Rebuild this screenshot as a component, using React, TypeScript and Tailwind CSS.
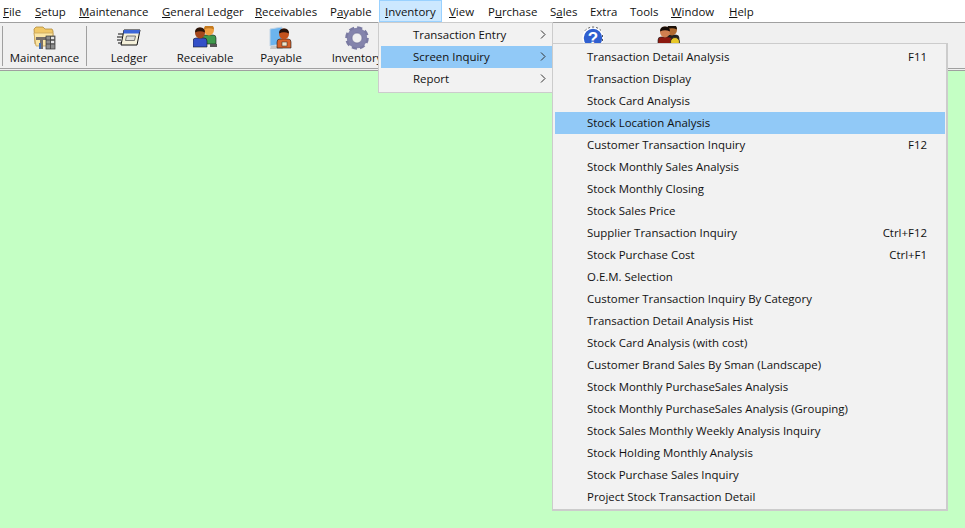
import type { ReactNode } from "react";

const FONT = "font-['Open_Sans','Noto_Sans',sans-serif]";

// label, underlined index, width of the slot in the bar
const MENUS: [string, number, number][] = [
  ["File", 0, 32],
  ["Setup", 0, 44],
  ["Maintenance", 0, 83],
  ["General Ledger", 0, 93],
  ["Receivables", 0, 75],
  ["Payable", 1, 55],
  ["Inventory", 0, 64],
  ["View", 0, 39],
  ["Purchase", 1, 62],
  ["Sales", 1, 40],
  ["Extra", -1, 40],
  ["Tools", -1, 41],
  ["Window", 0, 58],
  ["Help", 0, 40],
];

const INQUIRY: [string, string?][] = [
  ["Transaction Detail Analysis", "F11"],
  ["Transaction Display"],
  ["Stock Card Analysis"],
  ["Stock Location Analysis"],
  ["Customer Transaction Inquiry", "F12"],
  ["Stock Monthly Sales Analysis"],
  ["Stock Monthly Closing"],
  ["Stock Sales Price"],
  ["Supplier Transaction Inquiry", "Ctrl+F12"],
  ["Stock Purchase Cost", "Ctrl+F1"],
  ["O.E.M. Selection"],
  ["Customer Transaction Inquiry By Category"],
  ["Transaction Detail Analysis Hist"],
  ["Stock Card Analysis (with cost)"],
  ["Customer Brand Sales By Sman (Landscape)"],
  ["Stock Monthly PurchaseSales Analysis"],
  ["Stock Monthly PurchaseSales Analysis (Grouping)"],
  ["Stock Sales Monthly Weekly Analysis Inquiry"],
  ["Stock Holding Monthly Analysis"],
  ["Stock Purchase Sales Inquiry"],
  ["Project Stock Transaction Detail"],
];

function Person({ x, y, skin, shirt, hair }: { x: number; y: number; skin: string; shirt: string; hair: string }) {
  return (
    <g>
      <path d={`M${x - 7} ${y + 18}v-6q0-3 3-3h8q3 0 3 3v6z`} fill={shirt} stroke="#1a1a1a" strokeWidth="0.6" />
      <ellipse cx={x} cy={y + 4} rx="5" ry="5.4" fill={skin} />
      <path d={`M${x - 5} ${y + 3.5}q0-5 5-5t5 5q-5-2.4-10 0z`} fill={hair} />
    </g>
  );
}

const FolderIcon = () => (
  <svg width="24" height="24" viewBox="0 0 24 24">
    <path d="M1 3l2-2h7l2 2h7l1 2v13H2z" fill="#f0c868" stroke="#b08a3a" strokeWidth="0.8" />
    <path d="M1 7h19l-1 13H3z" fill="#fbe6a6" stroke="#c9a55a" strokeWidth="0.8" />
    <path d="M3 11h11v3h-4v9H7v-9H3z" fill="#77706a" />
    <path d="M6 17h2v6H6z" fill="#3f6fb5" />
    <rect x="13" y="10" width="9" height="13" fill="#8d8d8d" stroke="#333" strokeWidth="0.7" />
    <path d="M13 14h9M13 18h9M17.5 10v13" stroke="#333" strokeWidth="0.7" />
    <path d="M18 11h3v2h-3zM18 15h3v2h-3z" fill="#e4e4e4" />
  </svg>
);

const LedgerIcon = () => (
  <svg width="24" height="24" viewBox="0 0 24 24">
    <path d="M7 4h16l-3 15H4z" fill="#f5f1da" stroke="#111" strokeWidth="1" />
    <path d="M7 4h16l-.8 3.6H6.2z" fill="#3c66d8" />
    <path d="M9.5 10h9l-1 4.5h-9z" fill="#dededa" stroke="#555" strokeWidth="0.8" />
    <path d="M1 8h5M0 11h5M0 14h4M1 17h3" stroke="#111" strokeWidth="1" />
  </svg>
);

const ReceivableIcon = () => (
  <svg width="24" height="24" viewBox="0 0 24 24">
    <Person x={16} y={0} skin="#f0a040" shirt="#3f9a4c" hair="#c47a1e" />
    <Person x={7} y={3} skin="#a6481c" shirt="#3350c8" hair="#2a1408" />
    <rect x="17" y="18" width="7" height="3" fill="#555" />
  </svg>
);

const PayableIcon = () => (
  <svg width="24" height="24" viewBox="0 0 24 24">
    <path d="M1 3l12-2v17l-12 2z" fill="#6cb4ee" stroke="#c5d6e6" strokeWidth="1" />
    <path d="M2 20h10l2 3H1z" fill="#c9c9c9" />
    <Person x={15} y={4} skin="#c4521c" shirt="#d8622a" hair="#251008" />
    <rect x="13" y="16" width="5" height="4" fill="#f1e4c8" stroke="#222" strokeWidth="0.5" />
  </svg>
);

const GearIcon = () => (
  <svg width="24" height="24" viewBox="0 0 24 24">
    <circle cx="12" cy="12" r="7.6" fill="none" stroke="#8484ac" strokeWidth="5.4" />
    <circle cx="12" cy="12" r="10.6" fill="none" stroke="#7a7aa2" strokeWidth="2.4" strokeDasharray="5.2 3.1" />
    <circle cx="12" cy="12" r="5" fill="#f0f0f0" stroke="#6a6a90" strokeWidth="0.7" />
  </svg>
);

const HelpIcon = () => (
  <svg width="24" height="24" viewBox="0 0 24 24">
    <circle cx="12" cy="12" r="10" fill="#2f5fd0" stroke="#fff" strokeWidth="1.5" />
    <path d="M4 4.5a11 11 0 0 1 16 0M21.5 9v8" fill="none" stroke="#111" strokeWidth="0.7" strokeDasharray="2 2" />
    <text x="12" y="18" textAnchor="middle" fontSize="17" fontWeight="700" fill="#fff" fontFamily="Liberation Sans, sans-serif">?</text>
  </svg>
);

const StaffIcon = () => (
  <svg width="24" height="24" viewBox="0 0 24 24">
    <Person x={15} y={0} skin="#b06a30" shirt="#222" hair="#1c1008" />
    <Person x={8} y={2} skin="#d08050" shirt="#8c1a10" hair="#150a05" />
    <circle cx="18" cy="16" r="4.5" fill="#e8c828" stroke="#222" strokeWidth="0.8" />
  </svg>
);

function ToolButton({ icon, label, className }: { icon: ReactNode; label: string; className: string }) {
  return (
    <div className={`flex flex-col items-center shrink-0 ${className}`}>
      <div className="h-[24px] w-[24px] mt-[3px]">{icon}</div>
      <span className="leading-[16px] whitespace-nowrap">{label}</span>
    </div>
  );
}

function Item({ label, hot, right }: { label: string; hot?: boolean; right?: string }) {
  return (
    <div className={`h-[22px] flex items-center ${hot ? "bg-[#91c9f7]" : ""}`}>
      <span className="ml-[32px] whitespace-nowrap">{label}</span>
      {right && <span className="ml-auto mr-[18px]">{right}</span>}
    </div>
  );
}

function Chevron() {
  return (
    <svg width="6" height="9" viewBox="0 0 6 9" className="absolute right-[6px] top-[6px]">
      <path d="M1 .5l4 4-4 4" fill="none" stroke="#333" strokeWidth="1" />
    </svg>
  );
}

export default function App() {
  return (
    <div className={`${FONT} text-[11.45px] text-[#111] w-[965px] h-[528px] overflow-hidden relative flex flex-col bg-[#c4ffc4]`}>
      {/* menu bar */}
      <div className="h-[22px] bg-white border-b border-[#a0a0a0] flex items-start pl-[3px] shrink-0 box-content">
        {MENUS.map(([label, u, w]) => (
          <div key={label} style={{ width: w }} className="shrink-0 whitespace-nowrap leading-[24px]">
            {u < 0 ? label : (
              <>
                {label.slice(0, u)}
                <span className="underline">{label[u]}</span>
                {label.slice(u + 1)}
              </>
            )}
          </div>
        ))}
      </div>

      {/* toolbar */}
      <div className="h-[45px] bg-[#f0f0f0] border-b-[3px] border-double border-[#a0a0a0] box-content flex items-stretch shrink-0">
        <div className="w-[3px] mt-[3px] mb-[2px] border-r border-[#a0a0a0]" />
        <ToolButton icon={<FolderIcon />} label="Maintenance" className="w-[83px]" />
        <div className="w-px mt-[3px] mb-[2px] bg-[#a0a0a0]" />
        <div className="w-[4px]" />
        <ToolButton icon={<LedgerIcon />} label="Ledger" className="w-[76px]" />
        <ToolButton icon={<ReceivableIcon />} label="Receivable" className="w-[76px]" />
        <ToolButton icon={<PayableIcon />} label="Payable" className="w-[76px]" />
        <ToolButton icon={<GearIcon />} label="Inventory" className="w-[76px]" />
        <div className="w-[160px]" />
        <ToolButton icon={<HelpIcon />} label="" className="w-[76px]" />
        <ToolButton icon={<StaffIcon />} label="" className="w-[76px]" />
      </div>

      {/* open Inventory title */}
      <div className="absolute left-[379px] top-0 w-[63px] h-[22px] bg-[#cce8ff] border border-[#99d1ff] pl-[5px] leading-[22px]">
        <span className="underline">I</span>nventory
      </div>

      {/* Inventory dropdown */}
      <div className="absolute left-[378px] top-[22px] w-[175px] h-[71px] bg-[#f2f2f2] border border-[#cccccc] pl-[2px] pt-[1px]">
        <div className="relative"><Item label="Transaction Entry" /><Chevron /></div>
        <div className="relative"><Item label="Screen Inquiry" hot /><Chevron /></div>
        <div className="relative"><Item label="Report" /><Chevron /></div>
      </div>

      {/* Screen Inquiry submenu */}
      <div className="absolute left-[552px] top-[43px] w-[396px] h-[468px] bg-[#f2f2f2] border-2 border-[#cccccc] border-t border-l pl-[2px] pt-[2px] pr-[1px]">
        {INQUIRY.map(([label, key]) => (
          <Item key={label} label={label} right={key} hot={label === "Stock Location Analysis"} />
        ))}
      </div>
    </div>
  );
}
